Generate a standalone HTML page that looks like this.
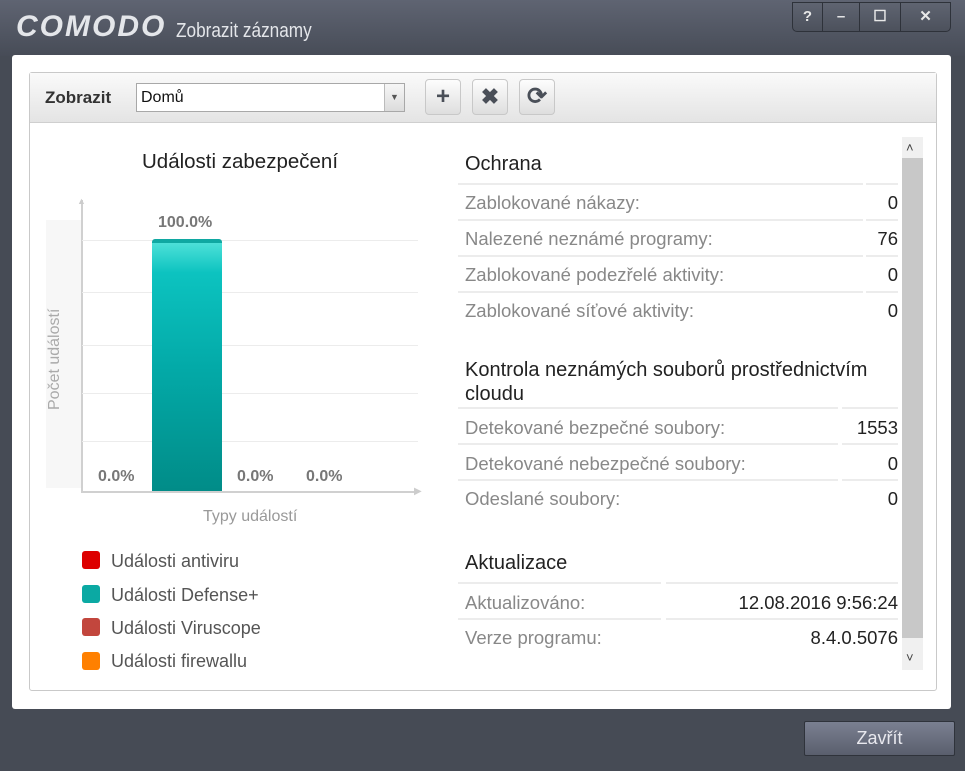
<!DOCTYPE html>
<html><head><meta charset="utf-8"><style>
*{margin:0;padding:0;box-sizing:border-box}
body{width:965px;height:771px;overflow:hidden;background:#464b55;font-family:"Liberation Sans",sans-serif;position:relative}
.a{position:absolute}
.top{left:0;top:0;width:965px;height:56px;background:linear-gradient(#5f6472,#474c57)}
.logo{left:16px;top:10px;font-size:30px;font-weight:bold;font-style:italic;color:#e4e6ea;letter-spacing:2px}
.ttl{left:176px;top:20px;font-size:20px;color:#e4e6ea;transform:scaleX(.86);transform-origin:left}
.wb{top:2px;height:30px;border:1px solid #2e323a;background:linear-gradient(#5f6471,#4c515c);color:#e8e8e8;text-align:center;line-height:28px;font-size:15px;font-weight:bold}
.panel{left:12px;top:55px;width:939px;height:654px;background:#fff;border-radius:3px}
.box{left:29px;top:72px;width:908px;height:619px;border:1px solid #c9c9c9;border-radius:3px}
.tb{left:30px;top:73px;width:906px;height:50px;background:linear-gradient(#fafafa,#e4e4e4);border-bottom:1px solid #cfcfcf}
.btn{top:79px;width:36px;height:36px;border:1px solid #c8c8c8;border-radius:4px;background:linear-gradient(#fdfdfd,#dedede);text-align:center;color:#4a4f58;font-weight:bold;font-size:24px;line-height:34px}
.lbl{color:#888;font-size:18.5px}
.val{color:#222;font-size:18.5px;text-align:right}
.ln{height:2px;background:#ececec}
.h{color:#222;font-size:20px}
.lg{width:18px;height:18px;border-radius:3px}
.lt{font-size:18px;color:#555}
.pc{font-size:16px;font-weight:bold;color:#777}
.gl{left:82px;width:336px;height:1px;background:#ececec}
</style></head><body>
<div class="a top"></div>
<div class="a logo">COMODO</div>
<div class="a ttl">Zobrazit záznamy</div>
<div class="a wb" style="left:792px;width:31px;border-radius:0 0 0 5px">?</div>
<div class="a wb" style="left:822px;width:38px">–</div>
<div class="a wb" style="left:859px;width:42px">☐</div>
<div class="a wb" style="left:900px;width:51px;border-radius:0 0 5px 0">✕</div>
<div class="a panel"></div>
<div class="a box"></div>
<div class="a tb"></div>
<div class="a" style="left:45px;top:88px;font-size:17px;font-weight:bold;color:#333">Zobrazit</div>
<div class="a" style="left:136px;top:83px;width:269px;height:29px;border:1px solid #a8a8a8;background:#fff"></div>
<div class="a" style="left:141px;top:89px;font-size:16px;color:#111">Domů</div>
<div class="a" style="left:384px;top:84px;width:20px;height:27px;background:linear-gradient(#f6f6f6,#dcdcdc);border-left:1px solid #bbb;font-size:9px;color:#555;text-align:center;line-height:27px">▼</div>
<div class="a btn" style="left:425px">+</div>
<div class="a btn" style="left:472px;font-size:22px">✖</div>
<div class="a btn" style="left:519px;font-size:24px">⟳</div>

<div class="a" style="left:142px;top:150px;font-size:20.5px;color:#222">Události zabezpečení</div>
<div class="a" style="left:46px;top:220px;width:36px;height:268px;background:#f7f7f7"></div>
<div class="a" style="left:46px;top:410px;transform:rotate(-90deg);transform-origin:left top;font-size:16px;color:#aaa;width:200px">Počet událostí</div>
<div class="a" style="left:81px;top:200px;width:2px;height:292px;background:#d0d0d0"></div>
<div class="a" style="left:77px;top:196px;color:#ccc;font-size:9px">▲</div>
<div class="a" style="left:81px;top:491px;width:336px;height:2px;background:#d0d0d0"></div>
<div class="a" style="left:414px;top:486px;color:#ccc;font-size:10px">▶</div>
<div class="a gl" style="top:240px"></div>
<div class="a gl" style="top:292px"></div>
<div class="a gl" style="top:345px"></div>
<div class="a gl" style="top:393px"></div>
<div class="a gl" style="top:441px"></div>
<div class="a" style="left:152px;top:239px;width:70px;height:252px;background:linear-gradient(#4de0d8 0,#0cc3c0 12%,#03aaa8 50%,#018c88 100%);border-top:4px solid #10a8a2;border-radius:3px 3px 0 0"></div>
<div class="a pc" style="left:158px;top:214px">100.0%</div>
<div class="a pc" style="left:98px;top:468px">0.0%</div>
<div class="a pc" style="left:237px;top:468px">0.0%</div>
<div class="a pc" style="left:306px;top:468px">0.0%</div>
<div class="a" style="left:203px;top:508px;font-size:16px;color:#999">Typy událostí</div>

<div class="a lg" style="left:82px;top:551px;background:#d00"></div><div class="a lt" style="left:111px;top:551px">Události antiviru</div>
<div class="a lg" style="left:82px;top:585px;background:#0ba9a3"></div><div class="a lt" style="left:111px;top:585px">Události Defense+</div>
<div class="a lg" style="left:82px;top:618px;background:#c2463d"></div><div class="a lt" style="left:111px;top:618px">Události Viruscope</div>
<div class="a lg" style="left:82px;top:652px;background:#ff8000"></div><div class="a lt" style="left:111px;top:651px">Události firewallu</div>

<div class="a" style="left:902px;top:137px;width:21px;height:533px;background:#f0f0f0"></div>
<div class="a" style="left:902px;top:158px;width:21px;height:480px;background:#c8c8c8"></div>
<div class="a" style="left:906px;top:140px;font-size:13px;color:#444">˄</div>
<div class="a" style="left:906px;top:650px;font-size:13px;color:#444">˅</div>

<div class="a h" style="left:465px;top:153px">Ochrana</div>
<div class="a ln" style="left:458px;top:183px;width:405px"></div><div class="a ln" style="left:866px;top:183px;width:32px"></div>
<div class="a lbl" style="left:465px;top:192px">Zablokované nákazy:</div><div class="a val" style="left:800px;top:192px;width:98px">0</div>
<div class="a ln" style="left:458px;top:219px;width:405px"></div><div class="a ln" style="left:866px;top:219px;width:32px"></div>
<div class="a lbl" style="left:465px;top:228px">Nalezené neznámé programy:</div><div class="a val" style="left:800px;top:228px;width:98px">76</div>
<div class="a ln" style="left:458px;top:255px;width:405px"></div><div class="a ln" style="left:866px;top:255px;width:32px"></div>
<div class="a lbl" style="left:465px;top:264px">Zablokované podezřelé aktivity:</div><div class="a val" style="left:800px;top:264px;width:98px">0</div>
<div class="a ln" style="left:458px;top:291px;width:405px"></div><div class="a ln" style="left:866px;top:291px;width:32px"></div>
<div class="a lbl" style="left:465px;top:300px">Zablokované síťové aktivity:</div><div class="a val" style="left:800px;top:300px;width:98px">0</div>

<div class="a h" style="left:465px;top:358px;font-size:20px;line-height:24px;width:435px">Kontrola neznámých souborů prostřednictvím cloudu</div>
<div class="a ln" style="left:458px;top:407px;width:380px"></div><div class="a ln" style="left:842px;top:407px;width:56px"></div>
<div class="a lbl" style="left:465px;top:417px">Detekované bezpečné soubory:</div><div class="a val" style="left:800px;top:417px;width:98px">1553</div>
<div class="a ln" style="left:458px;top:443px;width:380px"></div><div class="a ln" style="left:842px;top:443px;width:56px"></div>
<div class="a lbl" style="left:465px;top:453px">Detekované nebezpečné soubory:</div><div class="a val" style="left:800px;top:453px;width:98px">0</div>
<div class="a ln" style="left:458px;top:479px;width:380px"></div><div class="a ln" style="left:842px;top:479px;width:56px"></div>
<div class="a lbl" style="left:465px;top:488px">Odeslané soubory:</div><div class="a val" style="left:800px;top:488px;width:98px">0</div>

<div class="a h" style="left:465px;top:552px">Aktualizace</div>
<div class="a ln" style="left:458px;top:582px;width:203px"></div><div class="a ln" style="left:666px;top:582px;width:232px"></div>
<div class="a lbl" style="left:465px;top:592px">Aktualizováno:</div><div class="a val" style="left:680px;top:592px;width:218px">12.08.2016 9:56:24</div>
<div class="a ln" style="left:458px;top:618px;width:203px"></div><div class="a ln" style="left:666px;top:618px;width:232px"></div>
<div class="a lbl" style="left:465px;top:627px">Verze programu:</div><div class="a val" style="left:680px;top:627px;width:218px">8.4.0.5076</div>

<div class="a" style="left:804px;top:721px;width:151px;height:35px;border:1px solid #2f333b;border-radius:2px;background:linear-gradient(#7a8091,#5a5f6d);color:#e8e8ee;font-size:18px;text-align:center;line-height:33px">Zavřít</div>
</body></html>
